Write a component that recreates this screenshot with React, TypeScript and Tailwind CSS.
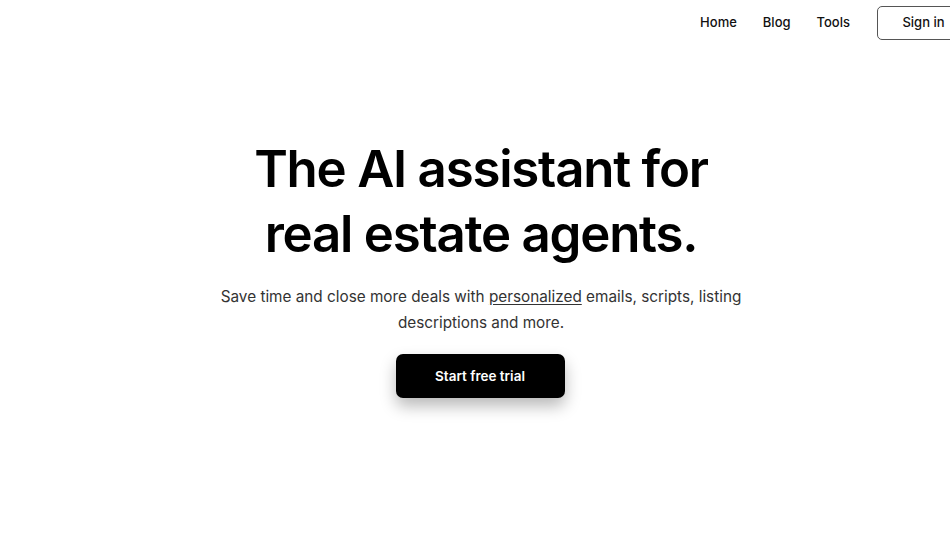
import React from 'react';

const navLinks = ['Home', 'Blog', 'Tools'];

const App: React.FC = () => {
  return (
    <div className="w-full min-h-[534px] bg-white overflow-hidden">
      <div className="w-[962px] font-['Inter',sans-serif] text-black">
        {/* Header */}
        <header className="flex items-center justify-end h-[45px] pt-[1px]">
          <nav className="flex items-center">
            {navLinks.map((link) => (
              <a key={link} href="#" className="text-[13px] font-medium text-[#111] mr-[26px]">
                {link}
              </a>
            ))}
            <button className="w-[90px] h-[34px] ml-[1px] mr-[-5px] border border-[#555] rounded-[5px] text-[13px] font-medium text-[#111] pl-[3px] text-center">
              Sign in
            </button>
          </nav>
        </header>

        {/* Hero */}
        <section className="flex flex-col items-center text-center pt-[91px]">
          <h1 className="text-[51px] leading-[65px] font-semibold tracking-[-0.024em]">
            The AI assistant for
            <br />
            real estate agents.
          </h1>
          <p className="mt-[18px] max-w-[560px] text-[15.3px] leading-[26px] text-[#333]">
            Save time and close more deals with{' '}
            <span className="underline underline-offset-2">personalized</span> emails, scripts, listing
            <br />
            descriptions and more.
          </p>
          <button className="mt-[18px] mr-[2px] w-[169px] h-[44px] rounded-[7px] bg-black text-white text-[13.5px] font-semibold shadow-[0_8px_16px_rgba(0,0,0,0.28)]">
            Start free trial
          </button>
        </section>
      </div>
    </div>
  );
};

export default App;
